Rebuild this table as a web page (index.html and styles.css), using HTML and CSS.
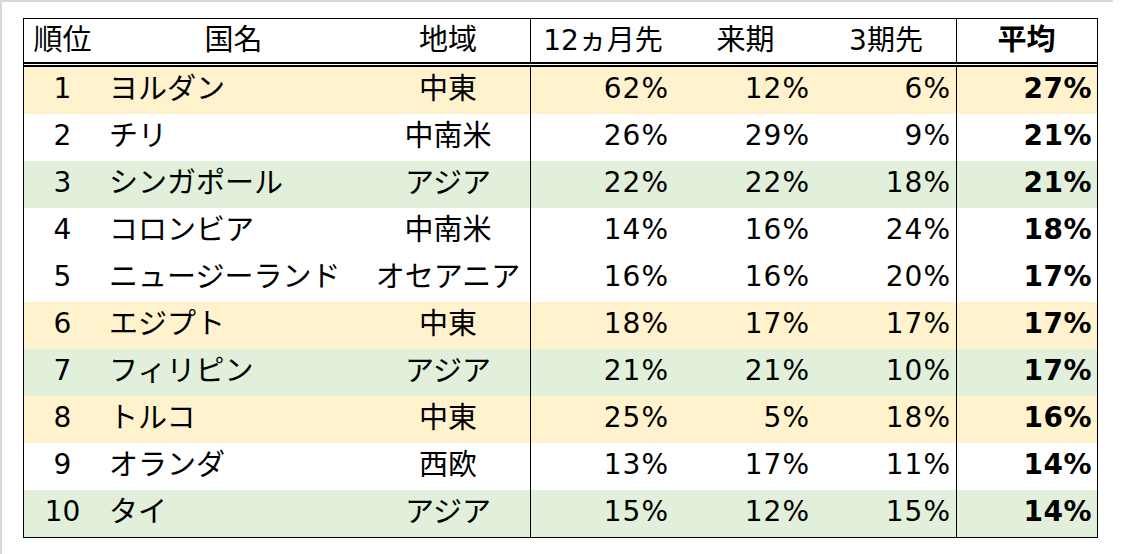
FILE: index.html
```html
<!DOCTYPE html>
<html lang="ja">
<head>
<meta charset="utf-8">
<title>ランキング</title>
<link rel="stylesheet" href="styles.css">
</head>
<body>
<div class="frame">
  <div class="sheet">
    <div class="row head">
      <div class="cell rank jp">順位</div>
      <div class="cell name-h jp">国名</div>
      <div class="cell region sep">地域</div>
      <div class="cell h">12ヵ月先</div>
      <div class="cell h jp">来期</div>
      <div class="cell h sep">3期先</div>
      <div class="cell h bold jp">平均</div>
    </div>
    <div class="row yellow">
      <div class="cell rank">1</div><div class="cell name">ヨルダン</div><div class="cell region sep">中東</div>
      <div class="cell num">62%</div><div class="cell num">12%</div><div class="cell num sep">6%</div><div class="cell avg">27%</div>
    </div>
    <div class="row">
      <div class="cell rank">2</div><div class="cell name">チリ</div><div class="cell region sep">中南米</div>
      <div class="cell num">26%</div><div class="cell num">29%</div><div class="cell num sep">9%</div><div class="cell avg">21%</div>
    </div>
    <div class="row green">
      <div class="cell rank">3</div><div class="cell name">シンガポール</div><div class="cell region sep">アジア</div>
      <div class="cell num">22%</div><div class="cell num">22%</div><div class="cell num sep">18%</div><div class="cell avg">21%</div>
    </div>
    <div class="row">
      <div class="cell rank">4</div><div class="cell name">コロンビア</div><div class="cell region sep">中南米</div>
      <div class="cell num">14%</div><div class="cell num">16%</div><div class="cell num sep">24%</div><div class="cell avg">18%</div>
    </div>
    <div class="row">
      <div class="cell rank">5</div><div class="cell name">ニュージーランド</div><div class="cell region sep">オセアニア</div>
      <div class="cell num">16%</div><div class="cell num">16%</div><div class="cell num sep">20%</div><div class="cell avg">17%</div>
    </div>
    <div class="row yellow">
      <div class="cell rank">6</div><div class="cell name">エジプト</div><div class="cell region sep">中東</div>
      <div class="cell num">18%</div><div class="cell num">17%</div><div class="cell num sep">17%</div><div class="cell avg">17%</div>
    </div>
    <div class="row green">
      <div class="cell rank">7</div><div class="cell name">フィリピン</div><div class="cell region sep">アジア</div>
      <div class="cell num">21%</div><div class="cell num">21%</div><div class="cell num sep">10%</div><div class="cell avg">17%</div>
    </div>
    <div class="row yellow">
      <div class="cell rank">8</div><div class="cell name">トルコ</div><div class="cell region sep">中東</div>
      <div class="cell num">25%</div><div class="cell num">5%</div><div class="cell num sep">18%</div><div class="cell avg">16%</div>
    </div>
    <div class="row">
      <div class="cell rank">9</div><div class="cell name">オランダ</div><div class="cell region sep">西欧</div>
      <div class="cell num">13%</div><div class="cell num">17%</div><div class="cell num sep">11%</div><div class="cell avg">14%</div>
    </div>
    <div class="row green">
      <div class="cell rank">10</div><div class="cell name">タイ</div><div class="cell region sep">アジア</div>
      <div class="cell num">15%</div><div class="cell num">12%</div><div class="cell num sep">15%</div><div class="cell avg">14%</div>
    </div>
  </div>
</div>
</body>
</html>
```

FILE: styles.css
```css
html, body {
  margin: 0;
  padding: 0;
  background: #ffffff;
}

body {
  font-family: "DejaVu Sans", "Noto Sans CJK JP", sans-serif;
  font-size: 28px;
  color: #000000;
}

.frame {
  width: 1113px;
  height: 554px;
  border-top: 2px solid #d9d9d9;
  border-left: 2px solid #d9d9d9;
  padding: 16px 0 0 21px;
  box-sizing: border-box;
}

.sheet {
  width: 1075px;
  border: 1px solid #000000;
  box-sizing: border-box;
}

.row {
  display: grid;
  grid-template-columns: 77px 265px 165px 144px 141px 141px 139px;
  height: 47px;
}

.row.head {
  height: 43px;
  border-bottom: 5px double #000000;
}

.row.yellow {
  background: #fff2cc;
}

.row.green {
  background: #e2efda;
}

.cell {
  line-height: 44px;
  white-space: nowrap;
  box-sizing: border-box;
}

.head .cell {
  line-height: 43px;
}

.sep {
  border-right: 1px solid #000000;
}

.rank {
  text-align: center;
}

.jp {
  font-size: 29px;
}

.name-h {
  text-align: center;
}

.name {
  padding-left: 8px;
  font-size: 29px;
}

.region {
  text-align: center;
  font-size: 29px;
}

.h {
  text-align: center;
}

.bold {
  font-weight: bold;
}

.num {
  text-align: right;
  padding-right: 6px;
  letter-spacing: 1px;
}

.num.sep {
  padding-right: 5px;
}

.avg {
  text-align: right;
  padding-right: 4px;
  font-weight: bold;
  letter-spacing: 0.5px;
}
```
